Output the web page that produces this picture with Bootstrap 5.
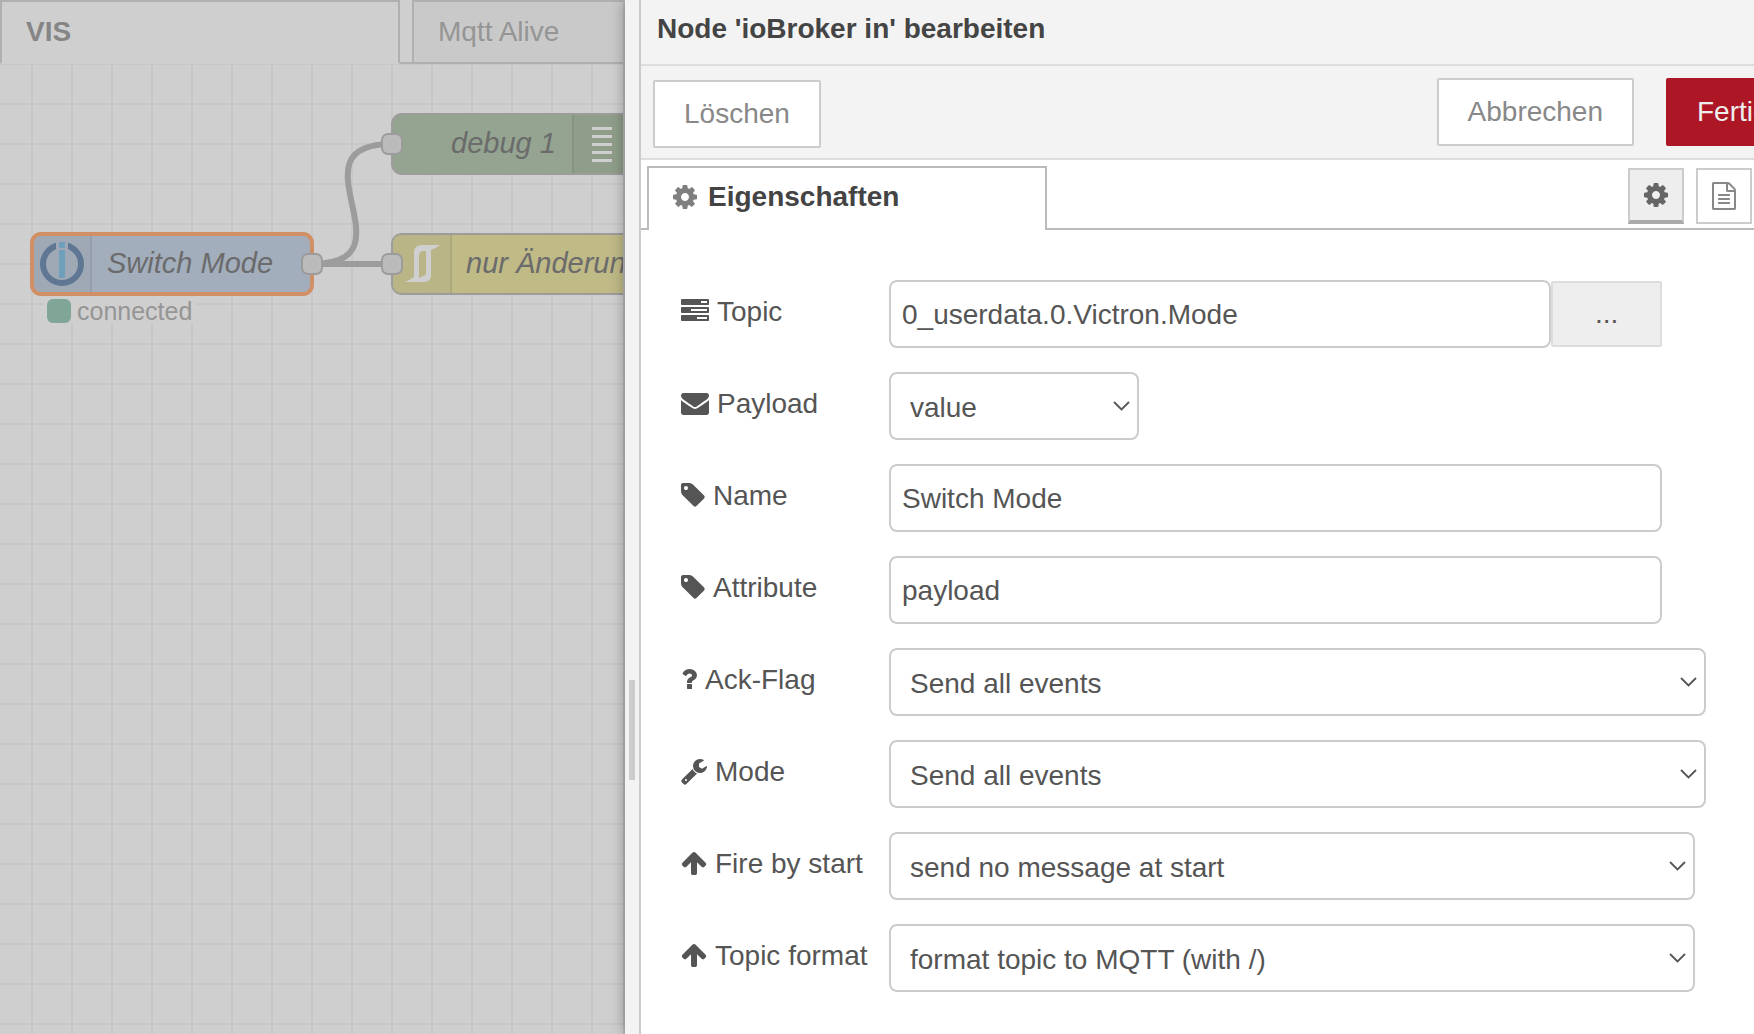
<!DOCTYPE html>
<html lang="de">
<head>
<meta charset="utf-8">
<meta name="viewport" content="width=device-width, initial-scale=1">
<title>Node-RED – Node bearbeiten</title>
<link href="https://cdn.jsdelivr.net/npm/bootstrap@5.3.0/dist/css/bootstrap.min.css" rel="stylesheet">
<style>
  body { font-family: "Liberation Sans", Arial, sans-serif; font-size: 28px; line-height: 36px; color: #555; background: #fff; }
  svg { flex: none; }

  /* workspace, dimmed while the tray is open */
  .workspace { flex: 623 1 0; min-width: 0; background: #cfcfcf; border-right: 2px solid #bbb; }
  .flow-tabs { height: 64px; }
  .flow-tab { border: 2px solid #b0b0b0; background: #c9c9c9; color: #959595; padding: 0 24px; line-height: 60px; text-decoration: none; white-space: nowrap; }
  .flow-tab.active { flex: 0 0 400px; background: #cfcfcf; color: #858585; font-weight: 700; border-bottom-color: transparent; }
  .flow-tab:last-child { border-right: 0; }
  .tab-gap { flex: 0 0 12px; border-bottom: 2px solid #b0b0b0; }
  .flow-canvas { min-height: 0;
    background-image: linear-gradient(#c7c7c7 2px, transparent 2px), linear-gradient(90deg, #c7c7c7 2px, transparent 2px);
    background-size: 40px 40px; background-position: 31px 39px; }
  .node-text { fill: #6b6b6b; font-style: italic; font-size: 29px; }
  .node-port { fill: #bbb; stroke: #9c9c9c; stroke-width: 2; }

  /* tray */
  .tray { flex: 1129 1 0; min-width: 0; z-index: 1; box-shadow: 0 0 14px rgba(0, 0, 0, .35); background: #fff; }
  .tray-handle { flex: 0 0 16px; background: #f3f3f3; border-right: 2px solid #ccc; }
  .tray-grip { width: 6px; height: 100px; margin-top: 680px; background: #ccc; }
  .tray-content { width: calc(100% + 45px); }
  .tray-title { height: 66px; padding: 9px 16px 0; background: #f3f3f3; color: #444; border-bottom: 2px solid #ddd; font-size: 28px; font-weight: 700; line-height: 40px; }
  .tray-toolbar { height: 94px; padding: 12px 0 0 12px; background: #f3f3f3; border-bottom: 2px solid #ddd; }
  .tray-btn { height: 68px; padding: 0 29px; border: 2px solid #ccc; border-radius: 2px; background: #fff; color: #888; font-size: 28px; line-height: 64px; }
  .tray-btn:hover { background: #eee; color: #666; border-color: #ccc; }
  .tray-btn.done { width: 133px; background: #ad1625; border-color: #ad1625; color: #eee; }
  .tray-btn.delete { margin-top: 2px; }
  .tray-tabs { height: 70px; padding-top: 6px; }
  .tabs-line { border-bottom: 2px solid #bbb; }
  .tabs-line.lead-in { flex: 0 0 6px; }
  .side-tabs { gap: 12px; padding: 2px 47px 0 0; }
  .prop-tab { width: 400px; border: 2px solid #bbb; border-bottom: 0; padding: 0 24px 4px; gap: 11px; color: #444; font-weight: 700; text-decoration: none; line-height: 58px; }
  .prop-tab svg { color: #7f7f7f; }
  .side-btn { width: 56px; height: 56px; border: 2px solid #ccc; border-radius: 0; background: #fff; color: #888; padding: 0; }
  .side-btn.active { background: #eee; color: #666; border-color: #ccc; border-bottom: 4px solid #aaa; }

  /* form */
  .node-form { padding: 50px 14px 0 40px; }
  .field-row { margin-bottom: 24px; }
  .field-label { flex: 0 0 208px; height: 64px; line-height: 64px; gap: 8px; white-space: nowrap; }
  .field-label svg { margin-bottom: 2px; }
  .field-row .form-control, .field-row .form-select { flex: none; height: 68px; border: 2px solid #ccc; border-radius: 8px; color: #555; font-size: 28px; line-height: 36px; background-color: #fff; }
  .field-row .form-control { padding: 2px 11px 0; }
  .field-row .form-select { padding: 4px 36px 0 19px;
    background-image: url("data:image/svg+xml,%3Csvg xmlns='http://www.w3.org/2000/svg' viewBox='0 0 17 10'%3E%3Cpath d='M1 1l7.500 7.500L16 1' fill='none' stroke='%23555' stroke-width='1.800'/%3E%3C/svg%3E");
    background-size: 17px 10px; background-position: right 7px center; }
  .browse-btn { width: 10%; height: 66px; margin-top: 1px; background: #eee; border: 2px solid #ddd; border-radius: 2px; color: #555; font-size: 28px; padding: 0; }
  .w-60 { width: 60%; } .w-70 { width: 70%; } .w-73 { width: 73%; } .w-74 { width: 74%; } .w-short { width: 250px; }
</style>
</head>
<body>
<svg class="d-none" aria-hidden="true">
  <defs>
    <path id="i-cog" d="M1152 896q0-106-75-181t-181-75-181 75-75 181 75 181 181 75 181-75 75-181zm512-109v222q0 12-8 23t-20 13l-185 28q-19 54-39 91 35 50 107 138 10 12 10 25t-9 23q-27 37-99 108t-94 71q-12 0-26-9l-138-108q-44 23-91 38-16 136-29 186-7 28-36 28h-222q-14 0-24.500-8.500t-11.500-21.500l-28-184q-49-16-90-37l-141 107q-10 9-25 9-14 0-25-11-126-114-165-168-7-10-7-23 0-12 8-23 15-21 51-66.500t54-70.500q-27-50-41-99l-183-27q-13-2-21-12.500t-8-23.500v-222q0-12 8-23t19-13l186-28q14-46 39-92-40-57-107-138-10-12-10-24 0-10 9-23 26-36 98.500-107.500t94.500-71.500q13 0 26 10l138 107q44-23 91-38 16-136 29-186 7-28 36-28h222q14 0 24.500 8.500t11.500 21.500l28 184q49 16 90 37l142-107q9-9 24-9 13 0 25 10 129 119 165 170 7 8 7 22 0 12-8 23-15 21-51 66.500t-54 70.500q26 50 41 98l183 28q13 2 21 12.500t8 23.500z"/>
    <path id="i-tag" d="M576 448q0-53-37.500-90.500t-90.500-37.500-90.500 37.500-37.500 90.500 37.500 90.500 90.500 37.500 90.500-37.500 37.500-90.500zm1067 576q0 53-37 90l-491 492q-39 37-91 37-53 0-90-37l-715-716q-38-37-64.500-101t-26.500-117v-416q0-52 38-90t90-38h416q53 0 117 26.500t102 64.500l715 714q37 39 37 91z"/>
    <path id="i-up" d="M1675 971q0 51-37 90l-75 75q-38 38-91 38-54 0-90-38l-294-293v704q0 52-37.500 84.500t-90.500 32.500h-128q-53 0-90.500-32.500t-37.500-84.500v-704l-294 293q-36 38-90 38t-90-38l-75-75q-38-38-38-90 0-53 38-91l651-651q35-37 90-37 54 0 91 37l651 651q37 39 37 91z"/>
  </defs>
</svg>

<div class="d-flex vh-100 overflow-hidden">
  <section class="workspace d-flex flex-column overflow-hidden" aria-label="Arbeitsbereich">
    <nav class="flow-tabs d-flex flex-shrink-0">
      <a class="flow-tab active" href="#">VIS</a>
      <div class="tab-gap"></div>
      <a class="flow-tab flex-grow-1" href="#">Mqtt Alive</a>
    </nav>
    <div class="flow-canvas flex-grow-1 overflow-hidden">
      <svg class="d-block" width="100%" height="100%" font-size="28">
        <g transform="translate(0 -64)">
          <g fill="none" stroke="#9c9c9c" stroke-width="6">
            <path d="M312 264H392"/>
            <path d="M312 264C418 264 286 144 392 144"/>
          </g>
          <!-- Switch Mode -->
          <rect x="32" y="234" width="280" height="60" rx="9" fill="#a3aebd"/>
          <path d="M91 235V293H41Q33 293 33 285V243Q33 235 41 235Z" fill="#9fa8b5"/>
          <path d="M91 235V293" stroke="#949dab" stroke-width="2"/>
          <rect x="32" y="234" width="280" height="60" rx="9" fill="none" stroke="#d08f65" stroke-width="4"/>
          <circle cx="62" cy="264" r="19" fill="none" stroke="#5f7792" stroke-width="6"/>
          <path d="M56 240H68V252H56Z" fill="#9fa8b5"/>
          <path d="M59 242H65V248H59ZM59 250H65V278H59Z" fill="#6f9fba"/>
          <text class="node-text" x="107" y="273">Switch Mode</text>
          <rect class="node-port" x="302" y="254" width="20" height="20" rx="6"/>
          <rect x="44" y="297" width="152" height="26" fill="#cfcfcf"/>
          <rect x="47" y="299" width="24" height="24" rx="6" fill="#7fa696"/>
          <text x="77" y="320" font-size="25" fill="#959595">connected</text>
          <!-- debug 1 -->
          <rect x="392" y="114" width="280" height="60" rx="10" fill="#95a490" stroke="#9c9c9c" stroke-width="2"/>
          <path d="M573 115H680V173H573Z" fill="#8f9d8a"/>
          <path d="M573 115V173" stroke="#879482" stroke-width="2"/>
          <path d="M592 128.500H612M592 136.500H612M592 144.500H612M592 152.500H612M592 160.500H612" stroke="#cfcfcf" stroke-width="3"/>
          <text class="node-text" x="451" y="153">debug 1</text>
          <rect class="node-port" x="382" y="134" width="20" height="20" rx="6"/>
          <!-- nur Änderungen -->
          <rect x="392" y="234" width="320" height="60" rx="10" fill="#bfba86" stroke="#9c9c9c" stroke-width="2"/>
          <path d="M451 235V293H402Q393 293 393 284V244Q393 235 402 235Z" fill="#bab586"/>
          <path d="M451 235V293" stroke="#aca77c" stroke-width="2"/>
          <path fill-rule="evenodd" fill="#cfcfcf" d="M440 245H422Q414 245 414 253V277Q410 280 405 282H424Q431 282 431 275V250Q436 248 440 245ZM419 256Q419 251 424 251H426V273Q426 276 423 276L419 278Z"/>
          <text class="node-text" x="466" y="273">nur Änderungen</text>
          <rect class="node-port" x="382" y="254" width="20" height="20" rx="6"/>
        </g>
      </svg>
    </div>
  </section>

  <section class="tray d-flex" aria-label="Node bearbeiten">
    <div class="tray-handle d-flex justify-content-center align-items-start overflow-hidden"><div class="tray-grip"></div></div>
    <div class="flex-grow-1 overflow-hidden">
      <div class="tray-content">
        <h1 class="tray-title m-0">Node 'ioBroker in' bearbeiten</h1>
        <div class="tray-toolbar d-flex align-items-start">
          <button type="button" class="btn tray-btn delete">Löschen</button>
          <button type="button" class="btn tray-btn ms-auto me-2">Abbrechen</button>
          <button type="button" class="btn tray-btn done ms-4">Fertig</button>
        </div>
        <div class="tray-tabs d-flex">
          <div class="tabs-line lead-in"></div>
          <a class="prop-tab d-flex align-items-center" href="#">
            <svg width="24" height="28" viewBox="128 0 1536 1792" fill="currentColor"><use href="#i-cog"/></svg>Eigenschaften</a>
          <div class="tabs-line side-tabs flex-grow-1 d-flex justify-content-end">
            <button type="button" class="btn side-btn active d-flex align-items-center justify-content-center" aria-label="Eigenschaften">
              <svg width="24" height="28" viewBox="128 0 1536 1792" fill="currentColor"><use href="#i-cog"/></svg></button>
            <button type="button" class="btn side-btn d-flex align-items-center justify-content-center" aria-label="Beschreibung">
              <svg width="24" height="28" viewBox="128 0 1536 1792" fill="currentColor"><path d="M1596 380q28 28 48 76t20 88v1152q0 40-28 68t-68 28h-1344q-40 0-68-28t-28-68v-1600q0-40 28-68t68-28h896q40 0 88 20t76 48zm-444-244v376h376q-10-29-22-41l-313-313q-12-12-41-22zm384 1528v-1024h-416q-40 0-68-28t-28-68v-416h-768v1536h1280zm-1024-864q0-14 9-23t23-9h704q14 0 23 9t9 23v64q0 14-9 23t-23 9h-704q-14 0-23-9t-9-23v-64zm736 224q14 0 23 9t9 23v64q0 14-9 23t-23 9h-704q-14 0-23-9t-9-23v-64q0-14 9-23t23-9h704zm0 256q14 0 23 9t9 23v64q0 14-9 23t-23 9h-704q-14 0-23-9t-9-23v-64q0-14 9-23t23-9h704z"/></svg></button>
          </div>
        </div>

        <form class="node-form">
          <div class="field-row d-flex align-items-start">
            <label class="field-label d-flex align-items-center" for="f-topic">
              <svg width="28" height="28" viewBox="0 0 1792 1792" fill="currentColor"><path d="M1024 1408h640v-128h-640v128zm-384-512h1024v-128h-1024v128zm640-512h384v-128h-384v128zm512 832v256q0 26-19 45t-45 19h-1664q-26 0-45-19t-19-45v-256q0-26 19-45t45-19h1664q26 0 45 19t19 45zm0-512v256q0 26-19 45t-45 19h-1664q-26 0-45-19t-19-45v-256q0-26 19-45t45-19h1664q26 0 45 19t19 45zm0-512v256q0 26-19 45t-45 19h-1664q-26 0-45-19t-19-45v-256q0-26 19-45t45-19h1664q26 0 45 19t19 45z"/></svg>Topic</label>
            <input class="form-control w-60" id="f-topic" type="text" value="0_userdata.0.Victron.Mode">
            <button type="button" class="btn browse-btn">...</button>
          </div>
          <div class="field-row d-flex align-items-start">
            <label class="field-label d-flex align-items-center" for="f-payload">
              <svg width="28" height="28" viewBox="0 0 1792 1792" fill="currentColor"><path d="M1792 710v794q0 66-47 113t-113 47h-1472q-66 0-113-47t-47-113v-794q44 49 101 87 362 246 497 345 57 42 92.500 65.500t94.500 48 110 24.500h2q51 0 110-24.500t94.500-48 92.500-65.500q170-123 498-345 57-39 100-87zm0-294q0 79-49 151t-122 123q-376 261-468 325-10 7-42.500 31t-54 38.500-52 32.500-57.500 27-50 9h-2q-23 0-50-9t-57.500-27-52-32.500-54-38.500-42.500-31q-91-64-262-182.500t-205-142.500q-62-42-117-115.500t-55-136.500q0-78 41.500-130t118.500-52h1472q65 0 112.500 47t47.500 113z"/></svg>Payload</label>
            <select class="form-select w-short" id="f-payload"><option>value</option><option>object</option></select>
          </div>
          <div class="field-row d-flex align-items-start">
            <label class="field-label d-flex align-items-center" for="f-name">
              <svg width="24" height="28" viewBox="128 0 1536 1792" fill="currentColor"><use href="#i-tag"/></svg>Name</label>
            <input class="form-control w-70" id="f-name" type="text" value="Switch Mode">
          </div>
          <div class="field-row d-flex align-items-start">
            <label class="field-label d-flex align-items-center" for="f-attr">
              <svg width="24" height="28" viewBox="128 0 1536 1792" fill="currentColor"><use href="#i-tag"/></svg>Attribute</label>
            <input class="form-control w-70" id="f-attr" type="text" value="payload">
          </div>
          <div class="field-row d-flex align-items-start">
            <label class="field-label d-flex align-items-center" for="f-ack">
              <svg width="16" height="28" viewBox="384 0 1024 1792" fill="currentColor"><path d="M1088 1256v240q0 16-12 28t-28 12h-240q-16 0-28-12t-12-28v-240q0-16 12-28t28-12h240q16 0 28 12t12 28zm316-600q0 54-15.500 101t-35 76.500-55 59.500-57.500 43.500-61 35.500q-41 23-68.500 65t-27.500 67q0 17-12 32.500t-28 15.500h-240q-15 0-25.500-18.500t-10.500-37.500v-45q0-83 65-156.500t143-108.500q59-27 84-56t25-76q0-42-46.500-74t-107.500-32q-65 0-108 29-35 25-107 115-13 16-31 16-12 0-25-8l-164-125q-13-10-15.500-25t5.500-28q160-266 464-266 80 0 161 31t146 83 106 127.500 41 158.500z"/></svg>Ack-Flag</label>
            <select class="form-select w-74" id="f-ack"><option>Send all events</option></select>
          </div>
          <div class="field-row d-flex align-items-start">
            <label class="field-label d-flex align-items-center" for="f-mode">
              <svg width="26" height="28" viewBox="64 0 1664 1792" fill="currentColor"><path d="M448 1472q0-26-19-45t-45-19-45 19-19 45 19 45 45 19 45-19 19-45zm644-420l-682 682q-37 37-90 37-52 0-91-37l-106-108q-38-36-38-90 0-53 38-91l681-681q39 98 114.500 173.500t173.500 114.500zm634-435q0 39-23 106-47 134-164.500 217.500t-258.500 83.500q-185 0-316.500-131.500t-131.500-316.500 131.500-316.500 316.500-131.500q58 0 121.500 16.500t107.500 46.500q16 11 16 28t-16 28l-293 169v224l193 107q5-3 79-48.500t135.500-81 70.500-35.500q15 0 23.500 10t8.500 25z"/></svg>Mode</label>
            <select class="form-select w-74" id="f-mode"><option>Send all events</option></select>
          </div>
          <div class="field-row d-flex align-items-start">
            <label class="field-label d-flex align-items-center" for="f-fire">
              <svg width="26" height="28" viewBox="64 0 1664 1792" fill="currentColor"><use href="#i-up"/></svg>Fire by start</label>
            <select class="form-select w-73" id="f-fire"><option>send no message at start</option></select>
          </div>
          <div class="field-row d-flex align-items-start">
            <label class="field-label d-flex align-items-center" for="f-format">
              <svg width="26" height="28" viewBox="64 0 1664 1792" fill="currentColor"><use href="#i-up"/></svg>Topic format</label>
            <select class="form-select w-73" id="f-format"><option>format topic to MQTT (with /)</option></select>
          </div>
        </form>
      </div>
    </div>
  </section>
</div>
<script src="https://cdn.jsdelivr.net/npm/bootstrap@5.3.0/dist/js/bootstrap.bundle.min.js"></script>
</body>
</html>
